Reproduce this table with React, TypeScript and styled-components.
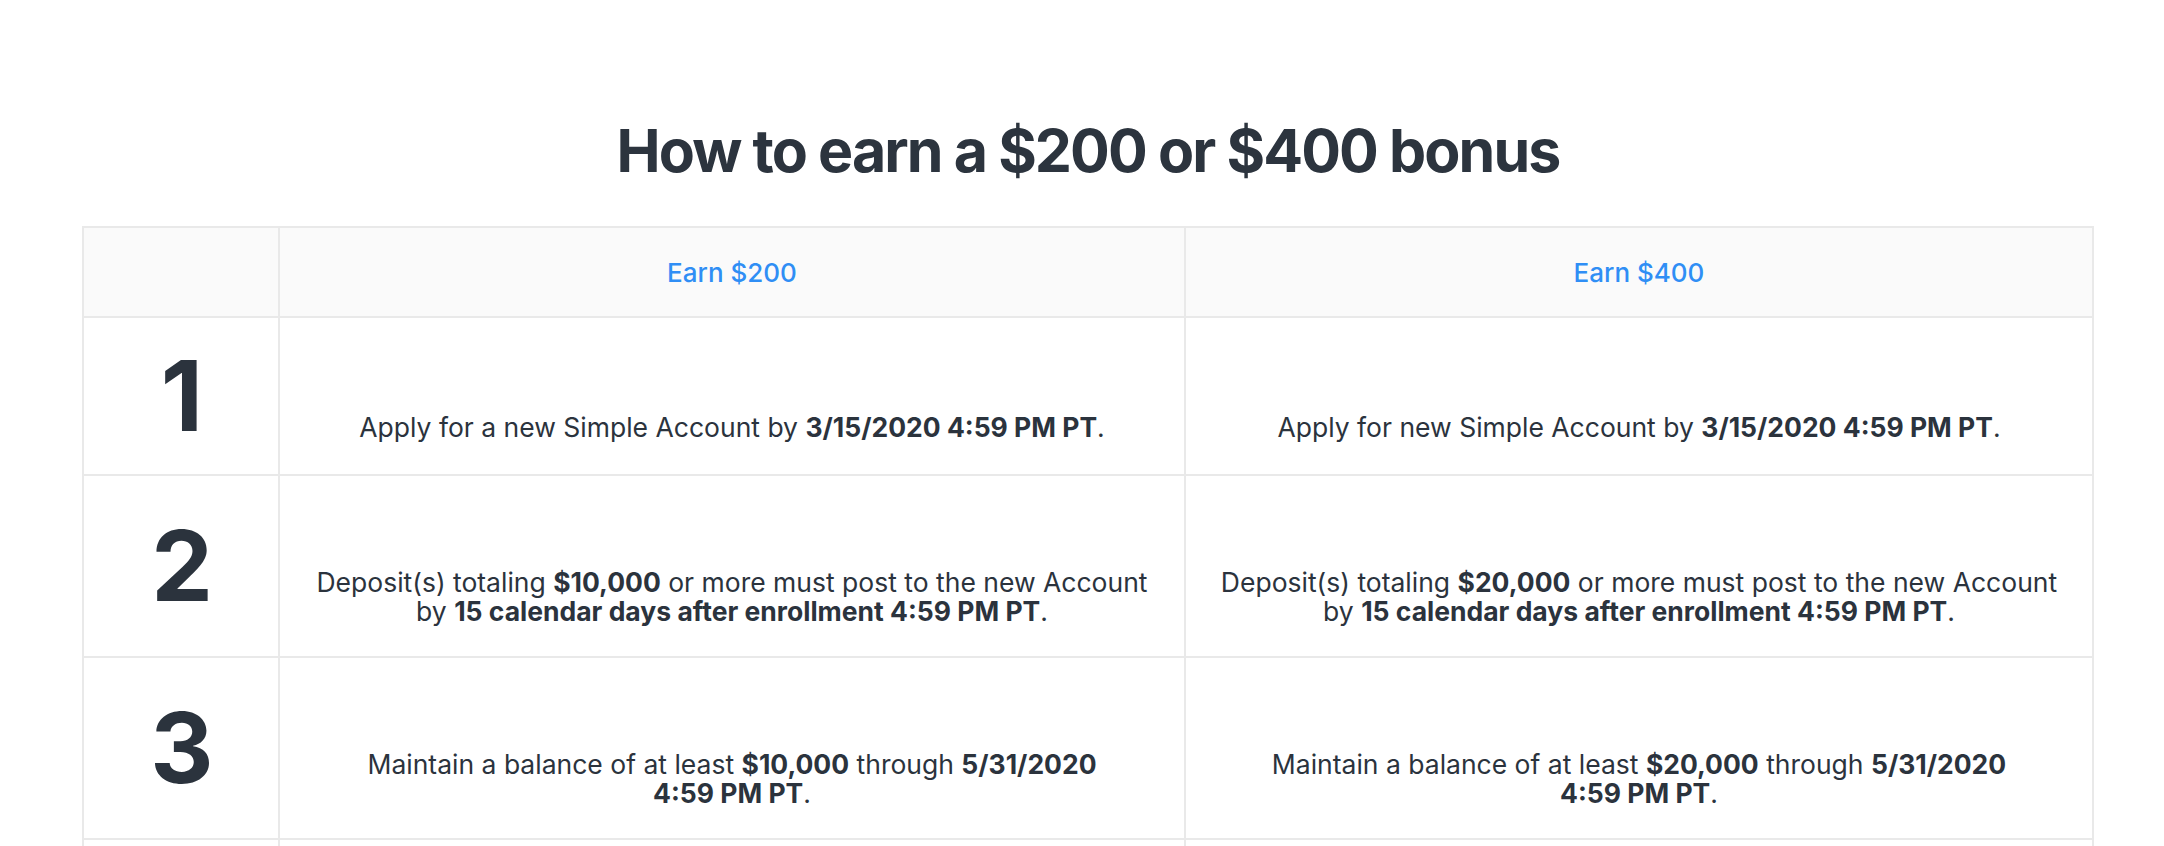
import React from "react";
import styled, { createGlobalStyle } from "styled-components";

const GlobalStyle = createGlobalStyle`
  html, body {
    margin: 0;
    padding: 0;
    background: #ffffff;
  }
  body {
    font-family: Inter, "Noto Sans", sans-serif;
    color: #2b333d;
  }
`;

const Page = styled.main`
  padding: 115px 70px 0 82px;
  display: flex;
  flex-direction: column;
  align-items: stretch;
`;

const Title = styled.h1`
  margin: 0 0 39px;
  font-family: Inter, sans-serif;
  font-weight: 700;
  font-size: 59px;
  line-height: 72px;
  letter-spacing: -1.9px;
  text-align: center;
  color: #2c343e;
`;

const Grid = styled.div`
  display: grid;
  grid-template-columns: 194px 904px 906px;
  gap: 2px;
  padding: 2px;
  background: #e9e9e9;
  width: 2012px;
  box-sizing: border-box;
`;

const HeadCell = styled.div`
  height: 88px;
  background: #fafafa;
  display: flex;
  align-items: center;
  justify-content: center;
  font-family: Inter, sans-serif;
  font-weight: 500;
  font-size: 26px;
  color: #2f8ef5;
`;

const NumCell = styled.div`
  background: #ffffff;
  display: flex;
  align-items: center;
  justify-content: center;
  padding: 28px 0;
  font-family: Inter, sans-serif;
  font-weight: 700;
  font-size: 98px;
  line-height: 100px;
  letter-spacing: -2px;
  color: #2b333d;
`;

const TextCell = styled.div`
  background: #ffffff;
  display: flex;
  flex-direction: column;
  justify-content: center;
  padding: 92px 20px 30px;
`;

const Body = styled.p`
  margin: 0;
  text-align: center;
  font-family: Inter, sans-serif;
  font-weight: 400;
  font-size: 26.5px;
  line-height: 29px;
  color: #2b333d;

  b {
    font-weight: 700;
  }
`;

const EmptyCell = styled.div`
  background: #ffffff;
  height: 120px;
`;

type Row = { n: string; a: React.ReactNode; b: React.ReactNode };

const rows: Row[] = [
  {
    n: "1",
    a: (
      <>
        Apply for a new Simple Account by <b>3/15/2020 4:59 PM PT</b>.
      </>
    ),
    b: (
      <>
        Apply for new Simple Account by <b>3/15/2020 4:59 PM PT</b>.
      </>
    ),
  },
  {
    n: "2",
    a: (
      <>
        Deposit(s) totaling <b>$10,000</b> or more must post to the new Account
        <br />
        by <b>15 calendar days after enrollment 4:59 PM PT</b>.
      </>
    ),
    b: (
      <>
        Deposit(s) totaling <b>$20,000</b> or more must post to the new Account
        <br />
        by <b>15 calendar days after enrollment 4:59 PM PT</b>.
      </>
    ),
  },
  {
    n: "3",
    a: (
      <>
        Maintain a balance of at least <b>$10,000</b> through <b>5/31/2020</b>
        <br />
        <b>4:59 PM PT</b>.
      </>
    ),
    b: (
      <>
        Maintain a balance of at least <b>$20,000</b> through <b>5/31/2020</b>
        <br />
        <b>4:59 PM PT</b>.
      </>
    ),
  },
];

export default function App() {
  return (
    <>
      <GlobalStyle />
      <Page>
        <Title>How to earn a $200 or $400 bonus</Title>
        <Grid>
          <HeadCell />
          <HeadCell>Earn $200</HeadCell>
          <HeadCell>Earn $400</HeadCell>
          {rows.map((r) => (
            <React.Fragment key={r.n}>
              <NumCell>{r.n}</NumCell>
              <TextCell>
                <Body>{r.a}</Body>
              </TextCell>
              <TextCell>
                <Body>{r.b}</Body>
              </TextCell>
            </React.Fragment>
          ))}
          <EmptyCell />
          <EmptyCell />
          <EmptyCell />
        </Grid>
      </Page>
    </>
  );
}
